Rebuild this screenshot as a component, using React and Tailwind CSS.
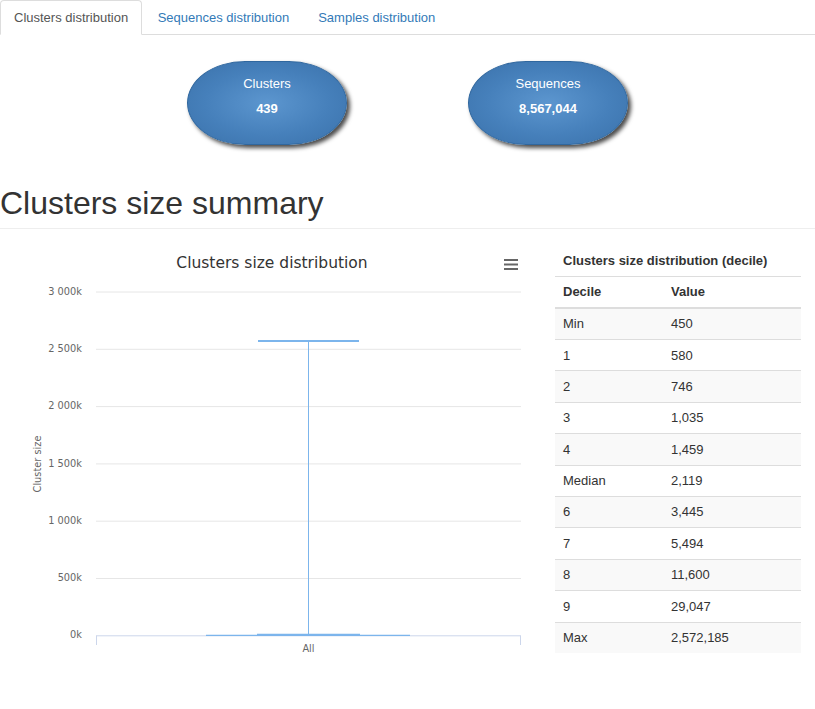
const deciles = [
  ['Min', '450'],
  ['1', '580'],
  ['2', '746'],
  ['3', '1,035'],
  ['4', '1,459'],
  ['Median', '2,119'],
  ['6', '3,445'],
  ['7', '5,494'],
  ['8', '11,600'],
  ['9', '29,047'],
  ['Max', '2,572,185'],
];

const ticks = ['3 000k', '2 500k', '2 000k', '1 500k', '1 000k', '500k', '0k'];

function Bubble({ label, value }) {
  return (
    <div className="flex h-[84px] w-[160px] flex-col items-center rounded-[58px/42px] border border-[#30679e] bg-[radial-gradient(ellipse_at_center,#5c96cf_0%,#4680bb_55%,#3a71aa_100%)] pt-[13px] text-[13px] leading-[18px] text-white shadow-[3px_3px_4px_#4a4a4a]">
      <span>{label}</span>
      <span className="mt-[7px] font-bold">{value}</span>
    </div>
  );
}

function BoxChart() {
  const top = 292;
  const step = 57.3;
  const bottom = top + step * 6;
  const font = '"DejaVu Sans", sans-serif';
  return (
    <svg width="543" height="425" viewBox="0 240 543 425" className="block">
      <text x="272" y="268" textAnchor="middle" fontFamily={font} fontSize="15.5" fill="#333">
        Clusters size distribution
      </text>
      <g stroke="#666" strokeWidth="2">
        <line x1="504" y1="260" x2="518" y2="260" />
        <line x1="504" y1="264.5" x2="518" y2="264.5" />
        <line x1="504" y1="269" x2="518" y2="269" />
      </g>
      {ticks.map((t, i) => {
        const y = top + step * i;
        return (
          <g key={t}>
            {i < 6 && <line x1="96" y1={y} x2="521" y2={y} stroke="#e6e6e6" strokeWidth="1" />}
            <text x="82" y={y + 2.6} textAnchor="end" fontFamily={font} fontSize="9.8" fill="#666">
              {t}
            </text>
          </g>
        );
      })}
      <g transform="translate(41,464) rotate(-90)">
        <text x="0" y="0" textAnchor="middle" fontFamily={font} fontSize="9.8" fill="#666">
          Cluster size
        </text>
      </g>
      <line x1="96" y1={bottom} x2="521" y2={bottom} stroke="#ccd6eb" strokeWidth="1" />
      <line x1="96.5" y1={bottom} x2="96.5" y2="645" stroke="#ccd6eb" strokeWidth="1" />
      <line x1="520.5" y1={bottom} x2="520.5" y2="645" stroke="#ccd6eb" strokeWidth="1" />
      <g stroke="#7cb5ec">
        <line x1="308.5" y1="341" x2="308.5" y2="635" strokeWidth="1" />
        <line x1="258" y1="341" x2="359" y2="341" strokeWidth="2" />
        <line x1="206" y1="635.3" x2="410" y2="635.3" strokeWidth="1.2" />
        <line x1="257" y1="634.8" x2="360" y2="634.8" strokeWidth="2" />
      </g>
      <text x="308.5" y="652" textAnchor="middle" fontFamily={font} fontSize="9.8" fill="#666">
        All
      </text>
    </svg>
  );
}

export default function App() {
  return (
    <div className="min-h-[709px] w-[815px] bg-white font-['Liberation_Sans',Arial,sans-serif] text-[13px] text-[#333]">
      <ul className="flex h-[35px] border-b border-[#ddd]">
        <li className="-mb-px mr-[2px] rounded-t-[4px] border border-[#ddd] border-b-white bg-white px-[13px] py-[8px] leading-[18px] text-[#555]">
          Clusters distribution
        </li>
        <li className="mr-[2px] border border-transparent px-[12.5px] py-[8px] leading-[18px] text-[#337ab7]">
          Sequences distribution
        </li>
        <li className="border border-transparent px-[12.5px] py-[8px] leading-[18px] text-[#337ab7]">
          Samples distribution
        </li>
      </ul>

      <div className="ml-[187px] mt-[26px] flex gap-[121px]">
        <Bubble label="Clusters" value="439" />
        <Bubble label="Sequences" value="8,567,044" />
      </div>

      <div className="mt-[41px] border-b border-[#eee] pb-[7px]">
        <h1 className="text-[32px] leading-[1.1] font-normal text-[#333]">Clusters size summary</h1>
      </div>

      <div className="mt-[11px] flex">
        <div className="w-[543px]">
          <BoxChart />
        </div>
        <div className="ml-[12px] w-[246px]">
          <div className="border-b border-[#ddd] pb-[6px] pl-[8px] pt-[12px] font-bold leading-[18px]">
            Clusters size distribution (decile)
          </div>
          <table className="w-full border-collapse">
            <thead>
              <tr className="h-[31px] border-b-2 border-[#ddd]">
                <th className="w-[108px] px-[8px] text-left font-bold">Decile</th>
                <th className="px-[8px] text-left font-bold">Value</th>
              </tr>
            </thead>
            <tbody>
              {deciles.map(([d, v], i) => (
                <tr key={d} className={`h-[31.4px] ${i > 0 ? 'border-t border-[#ddd]' : ''} ${i % 2 === 0 ? 'bg-[#f9f9f9]' : ''}`}>
                  <td className="px-[8px]">{d}</td>
                  <td className="px-[8px]">{v}</td>
                </tr>
              ))}
            </tbody>
          </table>
        </div>
      </div>
    </div>
  );
}
